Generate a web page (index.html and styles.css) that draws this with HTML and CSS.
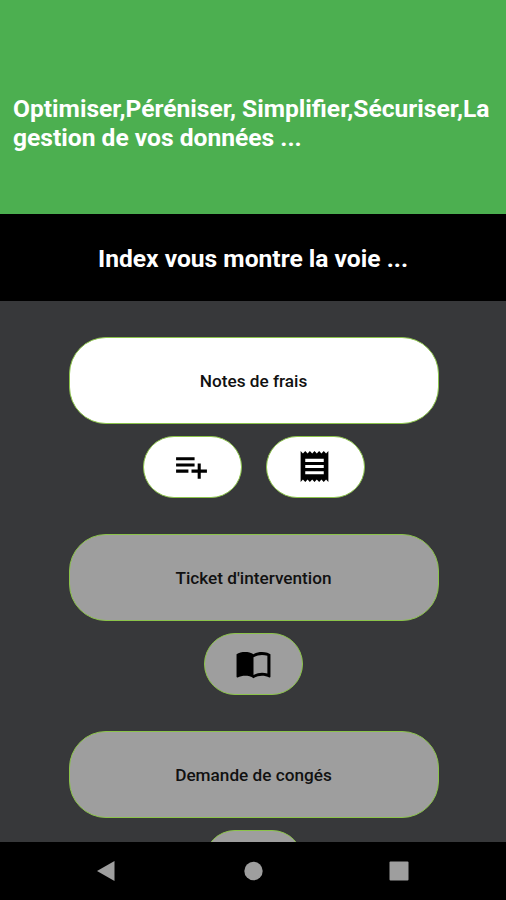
FILE: index.html
```html
<!DOCTYPE html>
<html lang="fr">
<head>
  <meta charset="UTF-8">
  <title>Index</title>
  <meta name="viewport" content="width=device-width, initial-scale=1.0">
  <link rel="stylesheet" href="styles.css">
</head>
<body>

  <header class="banner">
    <h1>Optimiser,Péréniser, Simplifier,Sécuriser,La gestion de vos données ...</h1>
  </header>

  <div class="tagline">Index vous montre la voie ...</div>

  <main class="menu">
    <section class="group">
      <button class="btn">Notes de frais</button>
      <div class="actions">
        <button class="btn small" aria-label="Ajouter">
          <svg viewBox="0 0 24 24"><path d="M14 10H2v2h12v-2zm0-4H2v2h12V6zm4 8v-4h-2v4h-4v2h4v4h2v-4h4v-2h-4zM2 16h8v-2H2v2z"/></svg>
        </button>
        <button class="btn small" aria-label="Liste">
          <svg viewBox="0 0 24 24"><path d="M18 17H6v-2h12v2zm0-4H6v-2h12v2zm0-4H6V7h12v2zM3 22l1.5-1.5L6 22l1.5-1.5L9 22l1.5-1.5L12 22l1.5-1.5L15 22l1.5-1.5L18 22l1.5-1.5L21 22V2l-1.5 1.5L18 2l-1.5 1.5L15 2l-1.5 1.5L12 2l-1.5 1.5L9 2 7.5 3.5 6 2 4.5 3.5 3 2v20z"/></svg>
        </button>
      </div>
    </section>

    <section class="group off">
      <button class="btn">Ticket d'intervention</button>
      <div class="actions">
        <button class="btn small" aria-label="Consulter">
          <svg viewBox="0 0 24 24"><path d="M21 5c-1.11-.35-2.33-.5-3.5-.5-1.95 0-4.05.4-5.5 1.5-1.45-1.1-3.55-1.5-5.5-1.5S2.45 4.9 1 6v14.65c0 .25.25.5.5.5.1 0 .15-.05.25-.05C3.1 20.45 5.05 20 6.5 20c1.95 0 4.05.4 5.5 1.5 1.35-.85 3.8-1.5 5.5-1.5 1.65 0 3.35.3 4.75 1.05.1.05.15.05.25.05.25 0 .5-.25.5-.5V6c-.6-.45-1.25-.75-2-1zm0 13.5c-1.1-.35-2.3-.5-3.5-.5-1.7 0-4.15.65-5.5 1.5V8c1.35-.85 3.8-1.5 5.5-1.5 1.2 0 2.4.15 3.5.5v11.5z"/></svg>
        </button>
      </div>
    </section>

    <section class="group off">
      <button class="btn">Demande de congés</button>
      <div class="actions">
        <button class="btn small" aria-label="Ouvrir"></button>
      </div>
    </section>
  </main>

  <nav class="navbar">
    <svg viewBox="0 0 20 22"><path d="M1 11L18.5 1v20z"/></svg>
    <svg viewBox="0 0 20 22"><circle cx="10.5" cy="11" r="9.2"/></svg>
    <svg viewBox="0 0 20 22"><rect x=".5" y="1.5" width="19" height="19" rx="1"/></svg>
  </nav>

</body>
</html>
```
FILE: styles.css
```css
* {
  box-sizing: border-box;
}
body {
  margin: 0;
  height: 900px;
  display: flex;
  flex-direction: column;
  overflow: hidden;
  font-family: Roboto, sans-serif;
  background: #37383a;
}
.banner {
  height: 214px;
  padding: 32px 12px 0 13px;
  display: flex;
  align-items: center;
  background: #4caf50;
}
.banner h1 {
  margin: 0;
  font-size: 24.6px;
  line-height: 29px;
  font-weight: bold;
  color: #fff;
}
.tagline {
  height: 87px;
  padding-top: 2px;
  display: flex;
  align-items: center;
  justify-content: center;
  background: #000;
  color: #fff;
  font-size: 24.6px;
  font-weight: bold;
}
.menu {
  flex: 1;
  min-height: 0;
  overflow: hidden;
  padding: 36px 0 0 1px;
}
.group {
  display: flex;
  flex-direction: column;
  align-items: center;
  gap: 12px;
  margin-bottom: 36px;
}
.actions {
  display: flex;
  gap: 24px;
}
.btn {
  width: 370px;
  height: 87px;
  padding: 0;
  display: flex;
  align-items: center;
  justify-content: center;
  border: 1.5px solid #8bc34a;
  border-radius: 37px;
  background: #fff;
  color: #111;
  font-family: inherit;
  font-size: 17.2px;
  font-weight: 500;
}
.small {
  width: 99px;
  height: 62px;
}
.btn svg {
  width: 37px;
  height: 37px;
  margin: 0 1px 1px 0;
  fill: #000;
}
.off .btn {
  background: #9e9e9e;
}
.navbar {
  height: 58px;
  display: flex;
  align-items: center;
  justify-content: space-between;
  padding: 0 97px 0 96px;
  background: #000;
}
.navbar svg {
  width: 20px;
  height: 22px;
  fill: #9e9e9e;
}
```
